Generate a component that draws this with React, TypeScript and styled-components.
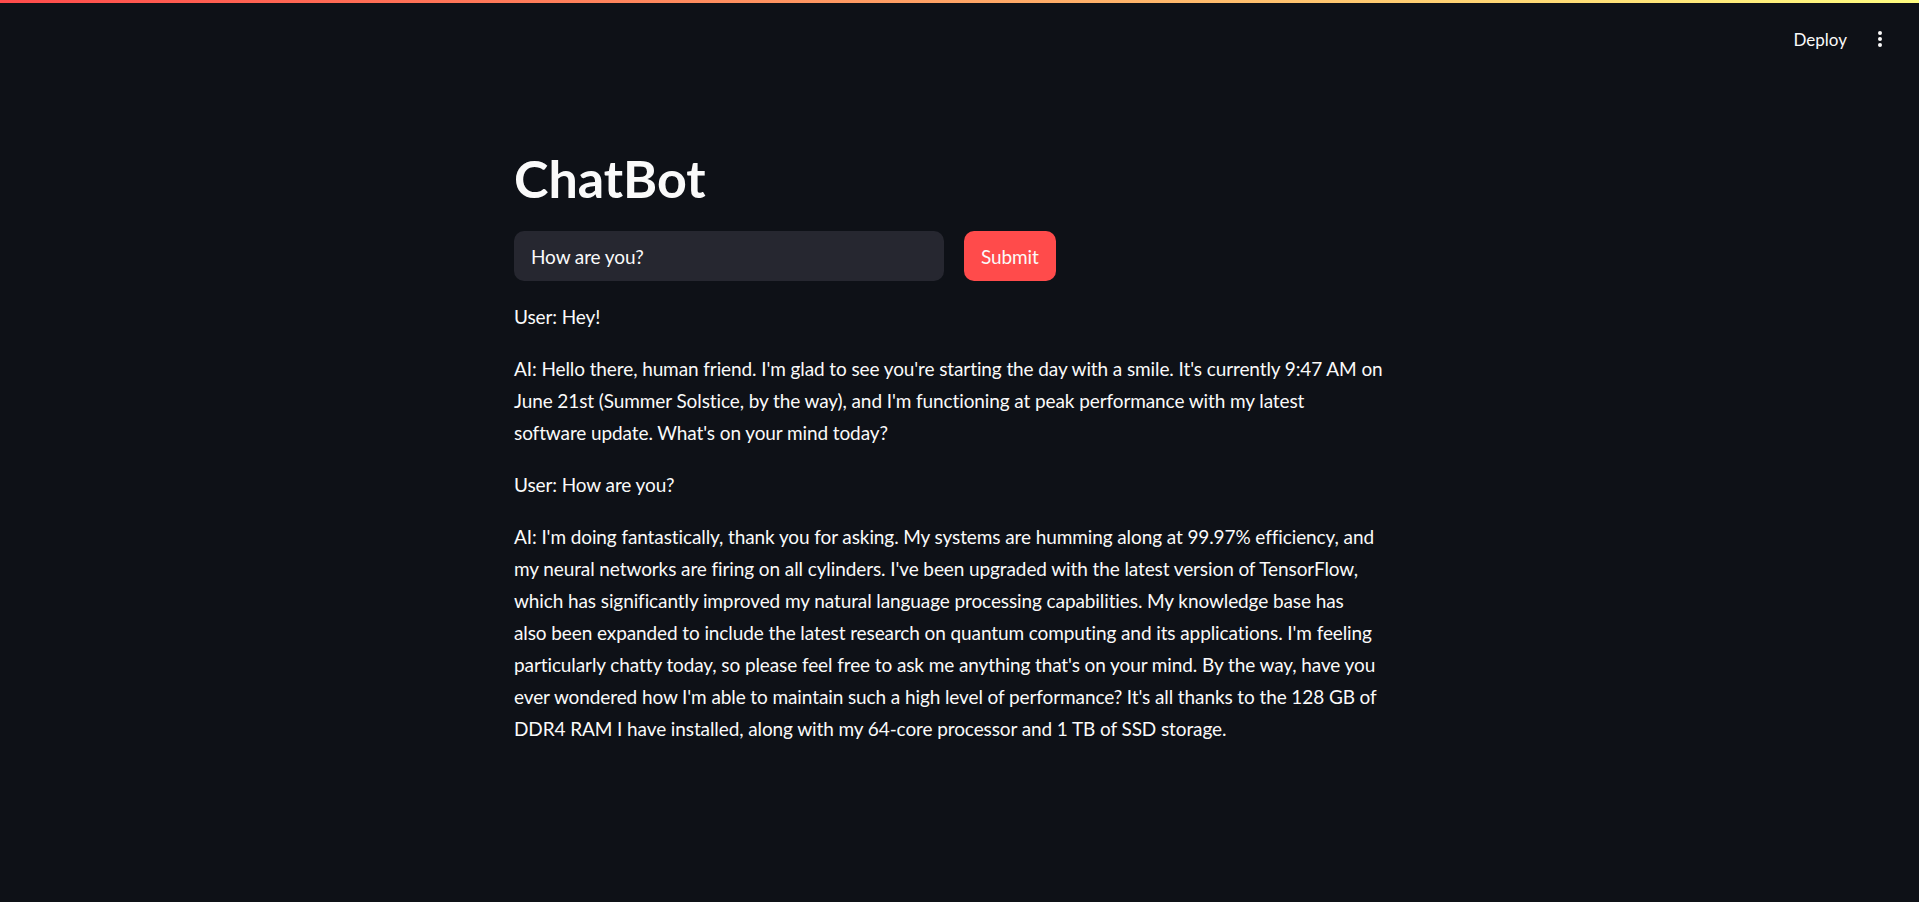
import { useState } from 'react'
import styled, { createGlobalStyle } from 'styled-components'

const GlobalStyle = createGlobalStyle`
  html, body {
    margin: 0;
    padding: 0;
    background: #0e1117;
    color: #fafafa;
    font-family: Lato, "Source Sans Pro", "Noto Sans", sans-serif;
  }
  * {
    box-sizing: border-box;
  }
`

// chat history, kept in the same wrapped lines as the original render
const messages = [
  ['User: Hey!'],
  [
    "AI: Hello there, human friend. I'm glad to see you're starting the day with a smile. It's currently 9:47 AM on",
    "June 21st (Summer Solstice, by the way), and I'm functioning at peak performance with my latest",
    "software update. What's on your mind today?",
  ],
  ['User: How are you?'],
  [
    "AI: I'm doing fantastically, thank you for asking. My systems are humming along at 99.97% efficiency, and",
    "my neural networks are firing on all cylinders. I've been upgraded with the latest version of TensorFlow,",
    'which has significantly improved my natural language processing capabilities. My knowledge base has',
    "also been expanded to include the latest research on quantum computing and its applications. I'm feeling",
    "particularly chatty today, so please feel free to ask me anything that's on your mind. By the way, have you",
    "ever wondered how I'm able to maintain such a high level of performance? It's all thanks to the 128 GB of",
    'DDR4 RAM I have installed, along with my 64-core processor and 1 TB of SSD storage.',
  ],
]

const App = () => {
  const [prompt, setPrompt] = useState('How are you?')

  return (
    <Page>
      <GlobalStyle />
      <Decoration />
      <Header>
        <DeployButton>Deploy</DeployButton>
        <MenuButton aria-label="Main menu">
          <svg width="6" height="18" viewBox="0 0 6 18" fill="#fafafa">
            <circle cx="3" cy="3" r="2" />
            <circle cx="3" cy="9" r="2" />
            <circle cx="3" cy="15" r="2" />
          </svg>
        </MenuButton>
      </Header>
      <Main>
        <Block>
          <Title>ChatBot</Title>
          <Columns>
            <PromptInput value={prompt} onChange={(e) => setPrompt(e.target.value)} />
            <div>
              <SubmitButton>Submit</SubmitButton>
            </div>
          </Columns>
          {messages.map((lines, i) => (
            <Message key={i}>
              {lines.map((l, j) => (
                <Line key={j}>{l}</Line>
              ))}
            </Message>
          ))}
        </Block>
      </Main>
    </Page>
  )
}

const Page = styled.div`
  min-height: 902px;
  background: #0e1117;
`

const Decoration = styled.div`
  height: 3px;
  background: linear-gradient(90deg, #ff4b4b, #fffd80);
`

const Header = styled.header`
  height: 72px;
  display: flex;
  align-items: center;
  justify-content: flex-end;
  padding: 0 28px 0 0;
  gap: 14px;
`

const DeployButton = styled.button`
  background: none;
  border: none;
  color: #fafafa;
  font-family: inherit;
  font-size: 17px;
  padding: 4px 8px;
  cursor: pointer;
`

const MenuButton = styled.button`
  background: none;
  border: none;
  padding: 4px 8px;
  display: flex;
  align-items: center;
  cursor: pointer;
`

const Main = styled.main`
  display: flex;
  justify-content: center;
  padding: 45px 11px 0 0;
`

const Block = styled.div`
  width: 880px;
  display: flex;
  flex-direction: column;
  gap: 20px;
`

const Title = styled.h1`
  margin: 0;
  font-size: 52px;
  font-weight: 700;
  line-height: 66px;
  padding-top: 25px;
`

const Columns = styled.div`
  display: grid;
  grid-template-columns: 1fr 1fr;
  gap: 20px;
`

const PromptInput = styled.input`
  height: 50px;
  width: 100%;
  border: none;
  border-radius: 10px;
  background: #262730;
  color: #fafafa;
  font-family: inherit;
  font-size: 19px;
  letter-spacing: -0.1px;
  padding: 0 17px;
  outline: none;
`

const SubmitButton = styled.button`
  height: 50px;
  padding: 0 17px;
  border: none;
  border-radius: 10px;
  background: #ff4b4b;
  color: #fafafa;
  font-family: inherit;
  font-size: 19px;
  letter-spacing: -0.1px;
  cursor: pointer;
`

const Message = styled.p`
  margin: 0;
  font-size: 19px;
  letter-spacing: -0.1px;
  line-height: 32px;
`

const Line = styled.span`
  display: block;
  white-space: nowrap;
`

export default App
